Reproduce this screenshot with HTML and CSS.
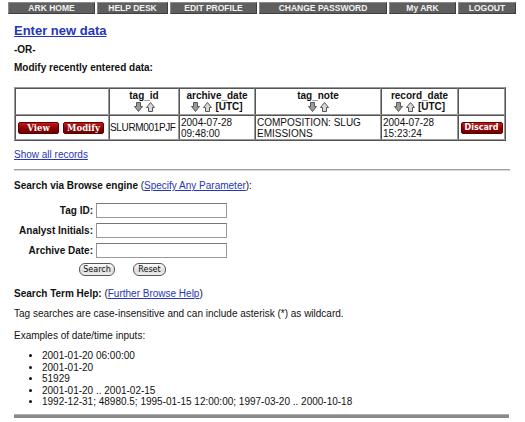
FILE: index.html
```html
<!DOCTYPE html>
<html>
<head>
<meta charset="utf-8">
<link rel="stylesheet" href="styles.css">
</head>
<body>
<nav class="nav">
  <a class="nav-btn w1">ARK HOME</a>
  <a class="nav-btn w2">HELP DESK</a>
  <a class="nav-btn w3">EDIT PROFILE</a>
  <a class="nav-btn w4">CHANGE PASSWORD</a>
  <a class="nav-btn w5">My ARK</a>
  <a class="nav-btn w6">LOGOUT</a>
</nav>
<main class="content">
  <a class="big-link" href="#">Enter new data</a>
  <p class="bold line or">-OR-</p>
  <p class="bold line modify">Modify recently entered data:</p>

  <table class="records">
    <colgroup>
      <col class="c1"><col class="c2"><col class="c3"><col class="c4"><col class="c5"><col class="c6">
    </colgroup>
    <tr class="head">
      <th></th>
      <th>tag_id<br><span class="arrows"><svg class="arr" viewBox="0 0 9 10"><polygon points="2.5,0.5 6.5,0.5 6.5,4.5 8.5,4.5 4.5,9.5 0.5,4.5 2.5,4.5" class="dn"/></svg><svg class="arr" viewBox="0 0 9 10"><polygon points="2.5,9.5 6.5,9.5 6.5,5.5 8.5,5.5 4.5,0.5 0.5,5.5 2.5,5.5" class="up"/></svg></span></th>
      <th>archive_date<br><span class="arrows"><svg class="arr" viewBox="0 0 9 10"><polygon points="2.5,0.5 6.5,0.5 6.5,4.5 8.5,4.5 4.5,9.5 0.5,4.5 2.5,4.5" class="dn"/></svg><svg class="arr" viewBox="0 0 9 10"><polygon points="2.5,9.5 6.5,9.5 6.5,5.5 8.5,5.5 4.5,0.5 0.5,5.5 2.5,5.5" class="up"/></svg> [UTC]</span></th>
      <th>tag_note<br><span class="arrows"><svg class="arr" viewBox="0 0 9 10"><polygon points="2.5,0.5 6.5,0.5 6.5,4.5 8.5,4.5 4.5,9.5 0.5,4.5 2.5,4.5" class="dn"/></svg><svg class="arr" viewBox="0 0 9 10"><polygon points="2.5,9.5 6.5,9.5 6.5,5.5 8.5,5.5 4.5,0.5 0.5,5.5 2.5,5.5" class="up"/></svg></span></th>
      <th>record_date<br><span class="arrows"><svg class="arr" viewBox="0 0 9 10"><polygon points="2.5,0.5 6.5,0.5 6.5,4.5 8.5,4.5 4.5,9.5 0.5,4.5 2.5,4.5" class="dn"/></svg><svg class="arr" viewBox="0 0 9 10"><polygon points="2.5,9.5 6.5,9.5 6.5,5.5 8.5,5.5 4.5,0.5 0.5,5.5 2.5,5.5" class="up"/></svg> [UTC]</span></th>
      <th></th>
    </tr>
    <tr class="data">
      <td class="actions"><span class="red-btn">View</span><span class="red-btn">Modify</span></td>
      <td class="tight">SLURM001PJF</td>
      <td>2004-07-28<br>09:48:00</td>
      <td>COMPOSITION: SLUG<br>EMISSIONS</td>
      <td>2004-07-28<br>15:23:24</td>
      <td class="discard-cell"><span class="red-btn discard">Discard</span></td>
    </tr>
  </table>

  <a class="small-link show-all" href="#">Show all records</a>
  <div class="thin-rule"></div>

  <p class="line search-title"><b>Search via Browse engine</b> (<a href="#">Specify Any Parameter</a>):</p>

  <form class="search-form">
    <div class="field"><label>Tag ID:</label><input type="text"></div>
    <div class="field"><label>Analyst Initials:</label><input type="text"></div>
    <div class="field"><label>Archive Date:</label><input type="text"></div>
    <div class="form-buttons">
      <span class="pill search">Search</span>
      <span class="pill reset">Reset</span>
    </div>
  </form>

  <p class="line help-title"><b>Search Term Help:</b> (<a href="#">Further Browse Help</a>)</p>
  <p class="line tag-note">Tag searches are case-insensitive and can include asterisk (*) as wildcard.</p>
  <p class="line examples">Examples of date/time inputs:</p>
  <ul class="ex-list">
    <li>2001-01-20 06:00:00</li>
    <li>2001-01-20</li>
    <li>51929</li>
    <li>2001-01-20 .. 2001-02-15</li>
    <li>1992-12-31; 48980.5; 1995-01-15 12:00:00; 1997-03-20 .. 2000-10-18</li>
  </ul>
  <div class="thick-rule"></div>
</main>
</body>
</html>
```
FILE: styles.css
```css
html, body {
  margin: 0;
  padding: 0;
  background: #fff;
}
body {
  font-family: "Liberation Sans", Arial, sans-serif;
  font-size: 10px;
  line-height: 12px;
  color: #111;
  padding-top: 2px;
}
a { color: #2636b8; }

.nav {
  display: flex;
  gap: 2px;
  margin-left: 8px;
  width: 508px;
  height: 12px;
}
.nav-btn {
  box-sizing: border-box;
  height: 12px;
  background: #5f5f5f;
  border-top: 1px solid #8a8a8a;
  border-left: 1px solid #8a8a8a;
  border-bottom: 1px solid #3e3e3e;
  border-right: 1px solid #3e3e3e;
  color: #f2f2f2;
  font-weight: bold;
  font-size: 8.5px;
  line-height: 10px;
  text-align: center;
  text-decoration: none;
}
.w1 { width: 87px; }
.w2 { width: 71px; }
.w3 { width: 87px; }
.w4 { width: 128px; }
.w5 { width: 67px; }
.w6 { width: 58px; }

.content {
  padding-left: 14px;
  width: 496px;
}
.line { margin: 0; }
.bold { font-weight: bold; }

.big-link {
  display: block;
  width: max-content;
  margin-top: 9px;
  font-size: 13px;
  line-height: 15px;
  font-weight: bold;
}
.or { margin-top: 6px; }
.modify { margin-top: 6px; }

.records {
  margin-top: 13px;
  width: 490px;
  table-layout: fixed;
  border-collapse: separate;
  border-spacing: 0;
  border-top: 1px solid #999;
  border-left: 1px solid #999;
  border-right: 1px solid #555;
  border-bottom: 1px solid #555;
}
.c1 { width: 94px; }
.c2 { width: 70px; }
.c3 { width: 76px; }
.c4 { width: 126px; }
.c5 { width: 77px; }
.c6 { width: 47px; }
.records th, .records td {
  border-top: 1px solid #555;
  border-left: 1px solid #555;
  border-right: 1px solid #999;
  border-bottom: 1px solid #999;
  padding: 0 1px;
  font-size: 10px;
  line-height: 11px;
}
.records th {
  height: 25px;
  text-align: center;
  font-weight: bold;
  vertical-align: middle;
}
.records td {
  height: 23px;
  text-align: left;
  vertical-align: middle;
  white-space: nowrap;
}
.records td.tight {
  padding: 0;
  letter-spacing: -0.35px;
}
.arrows {
  display: inline-flex;
  align-items: center;
  gap: 3px;
  height: 12px;
}
.arr {
  width: 9px;
  height: 10px;
}
.dn { fill: #9a9a9a; stroke: #555; stroke-width: 1; }
.up { fill: #d8d8d8; stroke: #555; stroke-width: 1; }

.actions {
  padding-left: 2px !important;
}
.red-btn {
  display: inline-block;
  box-sizing: border-box;
  height: 12px;
  border-radius: 2px;
  background: linear-gradient(#c21a1a, #8e0000 55%, #6e0000);
  border: 1px solid #5a0000;
  color: #fff;
  font-family: "DejaVu Serif", serif;
  font-weight: bold;
  font-size: 8.5px;
  line-height: 10px;
  text-align: center;
  vertical-align: middle;
}
.actions .red-btn { width: 41px; }
.actions .red-btn + .red-btn { margin-left: 4px; }
.discard-cell { text-align: center !important; }
.red-btn.discard {
  width: 42px;
  font-family: "DejaVu Sans", sans-serif;
  font-size: 8px;
  line-height: 10px;
}

.small-link {
  display: block;
  width: max-content;
  margin-top: 8px;
}
.thin-rule {
  margin-top: 8px;
  height: 1px;
  background: #a0a0a0;
  border-bottom: 1px solid #d8d8d8;
  width: 496px;
}
.search-title { margin-top: 9px; }
.search-title b { font-weight: bold; }

.search-form { margin-top: 11px; }
.field {
  display: grid;
  grid-template-columns: 79px 131px;
  column-gap: 3px;
  align-items: center;
  height: 15px;
  margin-bottom: 5px;
}
.field label {
  text-align: right;
  font-weight: bold;
}
.field input {
  box-sizing: border-box;
  height: 15px;
  width: 131px;
  margin: 0;
  padding: 0;
  border: 1px solid #999;
  border-top-color: #777;
  background: #fff;
}
.form-buttons {
  display: flex;
  gap: 18px;
  margin-left: 65px;
  margin-top: 5px;
  height: 13px;
}
.pill {
  box-sizing: border-box;
  display: inline-block;
  height: 13px;
  padding: 0 3px;
  border: 1px solid #555;
  border-radius: 6px;
  background: linear-gradient(#fdfdfd, #dcdcdc 60%, #f0f0f0);
  font-family: "DejaVu Sans", sans-serif;
  font-size: 8px;
  line-height: 11px;
  color: #111;
  text-align: center;
}
.search { width: 36px; }
.reset { width: 33px; }

.help-title { margin-top: 12px; }
.tag-note { margin-top: 8px; }
.examples { margin-top: 10px; }
.ex-list {
  margin: 8px 0 0 0;
  padding-left: 28px;
  list-style: disc;
  line-height: 11.6px;
}
.thick-rule {
  margin-top: 6px;
  width: 495px;
  height: 3px;
  background: #8a8a8a;
  border-top: 1px solid #b0b0b0;
}
```
